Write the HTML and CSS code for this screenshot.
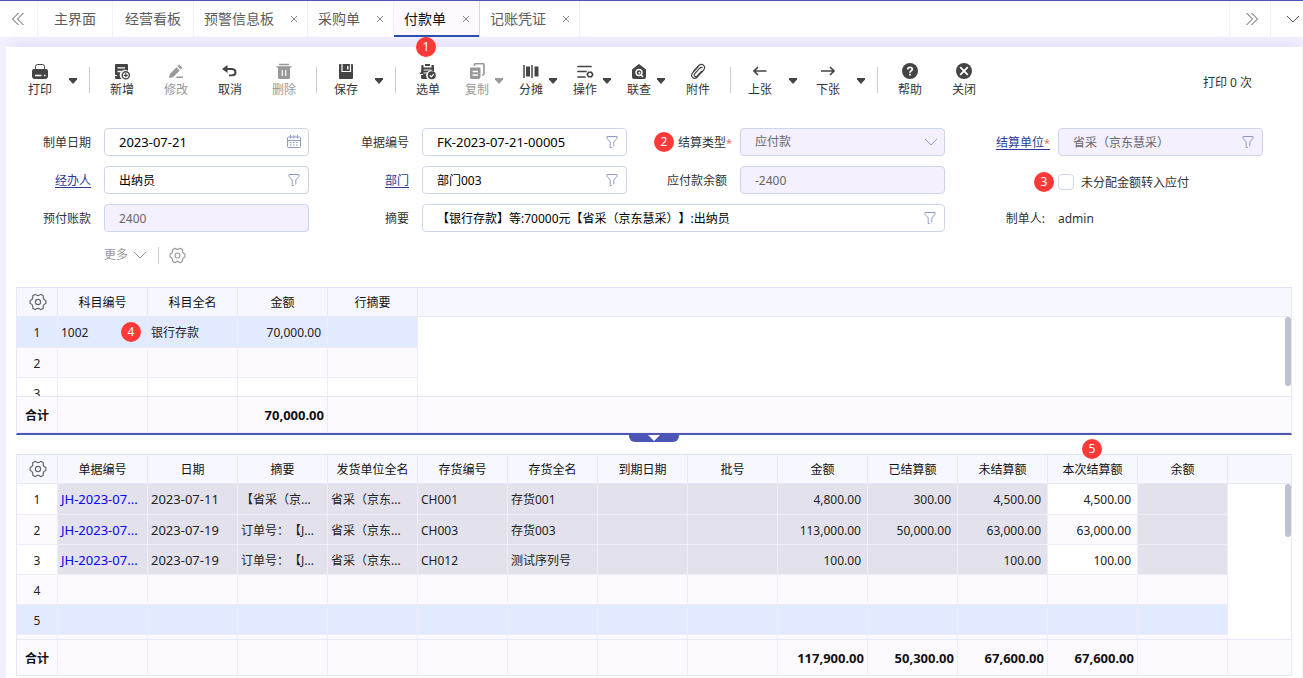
FILE: index.html
```html
<!DOCTYPE html>
<html lang="zh-CN">
<head>
<meta charset="utf-8">
<title>付款单</title>
<link rel="stylesheet" href="styles.css">
</head>
<body>
<svg class="defs" aria-hidden="true">
  <symbol id="gear" viewBox="0 0 18 18"><path d="M6.300 1.350Q9 3.800 11.700 1.350L14.300 2.850Q13.500 6.400 16.900 7.500V10.500Q13.500 11.600 14.300 15.150L11.700 16.650Q9 14.200 6.300 16.650L3.700 15.150Q4.500 11.600 1.100 10.500V7.500Q4.500 6.400 3.700 2.850z" fill="none" stroke="currentColor" stroke-width="1.200" stroke-linejoin="round"/><circle cx="9" cy="9" r="2.600" fill="none" stroke="currentColor" stroke-width="1.200"/></symbol>
  <symbol id="funnel" viewBox="0 0 16 16"><path d="M3 2.500h10v1.800L9.800 8v4.300M3 2.500v1.800L6.200 8v5.500h1.600" fill="none" stroke="currentColor"/></symbol>
  <symbol id="caret" viewBox="0 0 10 6"><path d="M1 0h8v1.500L5 6 1 1.500z" fill="currentColor"/></symbol>
  <symbol id="down" viewBox="0 0 14 8"><path d="m1 1 6 6 6-6" fill="none" stroke="currentColor"/></symbol>
  <symbol id="close" viewBox="0 0 8 8"><path d="m1 1 6 6M7 1 1 7" fill="none" stroke="currentColor"/></symbol>
</svg>

<nav class="tabs">
  <button class="tab-nav" aria-label="向左"><svg width="14" height="14" viewBox="0 0 14 14"><path d="M7.500 1 1.500 7l6 6M12.500 1l-6 6 6 6" fill="none" stroke="currentColor"/></svg></button>
  <a class="tab home" href="#">主界面</a>
  <a class="tab plain" href="#">经营看板</a>
  <a class="tab" href="#">预警信息板<svg class="x"><use href="#close"/></svg></a>
  <a class="tab" href="#">采购单<svg class="x"><use href="#close"/></svg></a>
  <a class="tab active" href="#">付款单<svg class="x"><use href="#close"/></svg><span class="badge b1">1</span></a>
  <a class="tab" href="#">记账凭证<svg class="x"><use href="#close"/></svg></a>
  <span class="fill"></span>
  <button class="tab-nav right" aria-label="向右"><svg width="14" height="14" viewBox="0 0 14 14"><path d="m1.500 1 6 6-6 6M6.500 1l6 6-6 6" fill="none" stroke="currentColor"/></svg></button>
  <button class="tab-nav last" aria-label="展开"><svg width="14" height="8"><use href="#down"/></svg></button>
</nav>

<main class="panel">
  <div class="toolbar">
    <div class="split">
      <button class="tool"><svg viewBox="0 0 18 18"><path d="M4.500 7V3.500q0-2 2-2h5q2 0 2 2V7" fill="none" stroke="currentColor"/><path d="M3 6h12q2 0 2 2v5q0 3-3 3H4q-3 0-3-3V8q0-2 2-2z" fill="currentColor"/><path d="M4 12.500h6.500M13 12.500h1.500" stroke="#fff" stroke-width="1.300"/></svg>打印</button>
      <button class="arrow" aria-label="打印选项"><svg><use href="#caret"/></svg></button>
    </div>
    <span class="sep"></span>
    <button class="tool"><svg viewBox="0 0 18 18"><path d="M3 1h11q1 0 1 1v6A4.600 4.600 0 0 0 8.600 16H3q-1 0-1-1v-2h2v-1H2V2q0-1 1-1z" fill="currentColor"/><path d="M4.500 4.800H12M4.500 8.500h4" stroke="#fff" stroke-width="1.300"/><circle cx="12.800" cy="12.300" r="3.600" fill="#fff" stroke="currentColor" stroke-width="1.400"/><path d="M12.800 10.300v4M10.800 12.300h4" stroke="currentColor" stroke-width="1.200"/></svg>新增</button>
    <button class="tool off" disabled><svg viewBox="0 0 18 18"><path d="m2 15 .8-4L9.500 4.300l3.200 3.200L6 14.200zM10.500 3.300 12.200 1.600l3.200 3.200-1.700 1.700zM8.500 15l1.400-1.400H16V15z" fill="currentColor"/></svg>修改</button>
    <button class="tool"><svg viewBox="0 0 18 18"><path d="M1 6 6.500 2v3h4.500q4.500.3 4.500 4.300 0 4-4.500 3.900H8v-1.700h3q2.500-.2 2.500-2.200T11 7H6.500v3z" fill="currentColor"/></svg>取消</button>
    <button class="tool off" disabled><svg viewBox="0 0 18 18"><path d="M4 1.500h10M1.500 4h15" stroke="currentColor" stroke-width="1.300"/><path d="M3 4h12v10.500q0 1.500-1.500 1.500h-9Q3 16 3 14.500z" fill="currentColor"/><path d="M7.300 7v6M10.700 7v6" stroke="#fff" stroke-width="1.200"/></svg>删除</button>
    <span class="sep"></span>
    <div class="split">
      <button class="tool"><svg viewBox="0 0 18 18"><path d="M3 1h12q1 0 1 1v13q0 1-1 1H3q-1 0-1-1V2q0-1 1-1z" fill="currentColor"/><path d="M5 1v7.500h8.500V1" fill="none" stroke="#fff" stroke-width="1.200"/><path d="M10.800 3v3.500" stroke="#fff" stroke-width="1.400"/></svg>保存</button>
      <button class="arrow" aria-label="保存选项"><svg><use href="#caret"/></svg></button>
    </div>
    <span class="sep"></span>
    <button class="tool"><svg viewBox="0 0 18 18"><path d="M2.500 2h2v2.500h8V2H14q1 0 1 1v5.700A4.500 4.500 0 0 0 8.700 16H3.500q-1.500 0-1.500-1.500V12h2v-1H1V9.500h1z" fill="currentColor"/><path d="M6 1h5v2H6z" fill="currentColor"/><path d="M4.500 7h8M4.500 10h4" stroke="#fff" stroke-width="1.200"/><circle cx="12.800" cy="12.300" r="4" fill="currentColor"/><path d="m10.800 12.300 1.500 1.600 2.600-2.900" fill="none" stroke="#fff" stroke-width="1.200"/></svg>选单</button>
    <div class="split compact">
      <button class="tool off" disabled><svg viewBox="0 0 18 18"><path d="M6.500 3V1.500Q6.500.7 7.500.7H15q1 0 1 1v9q0 1.300-1.500 1.300H14" fill="none" stroke="currentColor" stroke-width="1.700"/><path d="M3 4.500h8.500q1 0 1 1V14q0 2-2 2h-7Q2 16 2 14.500v-9q0-1 1-1z" fill="currentColor"/><path d="M4.500 8.500H10M4.500 12H10" stroke="#fff" stroke-width="1.300"/></svg>复制</button>
      <button class="arrow off" disabled aria-label="复制选项"><svg><use href="#caret"/></svg></button>
    </div>
    <div class="split compact">
      <button class="tool"><svg viewBox="0 0 18 18"><path d="M2 2v13M10 2v13" stroke="currentColor" stroke-width="1.500"/><path d="M4 3.500h4v10H4zM12.500 3.500h4v10h-4z" fill="currentColor"/></svg>分摊</button>
      <button class="arrow" aria-label="分摊选项"><svg><use href="#caret"/></svg></button>
    </div>
    <div class="split compact">
      <button class="tool"><svg viewBox="0 0 18 18"><path d="M2 3.500h13M2 8.500h8M2 14h7" stroke="currentColor" stroke-width="1.700" stroke-linecap="round"/><path d="m11.200 11.500 1.400-2.200h2.800l1.400 2.200-1.400 2.300h-2.800z" fill="none" stroke="currentColor" stroke-width="1.600"/></svg>操作</button>
      <button class="arrow" aria-label="操作选项"><svg><use href="#caret"/></svg></button>
    </div>
    <div class="split compact">
      <button class="tool"><svg viewBox="0 0 18 18"><path d="M9 1 15.500 6q.5.500.5 1.200V14q0 2-2 2H4q-2 0-2-2V7.200Q2 6.500 2.500 6z" fill="currentColor"/><circle cx="9" cy="9.500" r="3" fill="none" stroke="#fff" stroke-width="1.400"/><circle cx="9.400" cy="9.800" r="1" fill="#fff"/><path d="m11 12 2 2" stroke="#fff" stroke-width="1.400"/></svg>联查</button>
      <button class="arrow" aria-label="联查选项"><svg><use href="#caret"/></svg></button>
    </div>
    <button class="tool"><svg viewBox="0 0 18 18"><path d="m12.800 8-4.500 5q-1.300 1.300-2.500.2-1.200-1.200 0-2.500l5-5.500q1.500-1.400 2.800-.2M4.300 8.500 9.800 2.500q2.500-2.200 4.700-.3 2.200 2.200.2 4.800l-6.500 7.200q-2.400 2.200-4.600.3-2.100-2.300 0-4.700l6-6.500" fill="none" stroke="currentColor" stroke-width="1.200"/></svg>附件</button>
    <span class="sep"></span>
    <div class="split">
      <button class="tool"><svg viewBox="0 0 18 18"><path d="M15.500 8H3M7 4 3 8l4 4" fill="none" stroke="currentColor" stroke-width="1.700"/></svg>上张</button>
      <button class="arrow" aria-label="上张选项"><svg><use href="#caret"/></svg></button>
    </div>
    <div class="split">
      <button class="tool"><svg viewBox="0 0 18 18"><path d="M2 8h13M11 4l4 4-4 4" fill="none" stroke="currentColor" stroke-width="1.700"/></svg>下张</button>
      <button class="arrow" aria-label="下张选项"><svg><use href="#caret"/></svg></button>
    </div>
    <span class="sep"></span>
    <button class="tool"><svg viewBox="0 0 18 18"><circle cx="9" cy="8" r="8" fill="currentColor"/><path d="M6.700 6.500Q6.800 4.300 9 4.300t2.300 1.900Q11.300 7.400 9.900 8 9 8.500 9 9.800M9 10.800v1.700" fill="none" stroke="#fff" stroke-width="1.700"/></svg>帮助</button>
    <button class="tool"><svg viewBox="0 0 18 18"><circle cx="9" cy="8" r="8" fill="currentColor"/><path d="m5.200 4.200 7.600 7.600m0-7.600-7.600 7.600" stroke="#fff" stroke-width="1.800"/></svg>关闭</button>
    <span class="fill"></span>
    <span class="count">打印 0 次</span>
  </div>

  <form class="form">
    <label for="f1">制单日期</label>
    <div class="field"><input id="f1" class="code" value="2023-07-21"><svg viewBox="0 0 16 16"><path d="M2.500 3h11q1 0 1 1v8.500q0 1-1 1h-11q-1 0-1-1V4q0-1 1-1zM1.500 6.500h13M4.500 1v3.500M8 1v3.500M11.500 1v3.500" fill="none" stroke="currentColor"/><path d="M4 8.500h8M4 11h8" stroke="currentColor" stroke-dasharray="1.500 1.500"/></svg></div>
    <label for="f2">单据编号</label>
    <div class="field"><input id="f2" class="code" value="FK-2023-07-21-00005"><svg><use href="#funnel"/></svg></div>
    <label for="f3" class="req"><span class="badge b2">2</span>结算类型<i>*</i></label>
    <div class="field ro"><select id="f3"><option>应付款</option></select><svg class="chev" viewBox="0 0 14 8"><use href="#down"/></svg></div>
    <label for="f4" class="req link">结算单位<i>*</i></label>
    <div class="field ro"><input id="f4" value="省采（京东慧采）" readonly><svg><use href="#funnel"/></svg></div>

    <label for="f5" class="link">经办人</label>
    <div class="field"><input id="f5" value="出纳员"><svg><use href="#funnel"/></svg></div>
    <label for="f6" class="link">部门</label>
    <div class="field"><input id="f6" value="部门003"><svg><use href="#funnel"/></svg></div>
    <label for="f7">应付款余额</label>
    <div class="field ro"><input id="f7" value="-2400" readonly></div>
    <div class="check"><span class="badge b3">3</span><input type="checkbox" id="f8"><label for="f8">未分配金额转入应付</label></div>

    <label for="f9">预付账款</label>
    <div class="field ro"><input id="f9" value="2400" readonly></div>
    <label for="f10">摘要</label>
    <div class="field wide"><input id="f10" value="【银行存款】等:70000元【省采（京东慧采）】:出纳员"><svg><use href="#funnel"/></svg></div>
    <span class="lab">制单人:</span>
    <span class="maker">admin</span>

    <div class="more"><button type="button">更多<svg width="14" height="8"><use href="#down"/></svg></button><span class="bar"></span><button type="button" aria-label="设置"><svg width="17" height="17"><use href="#gear"/></svg></button></div>
  </form>

  <section class="grid accounts">
    <div class="rows">
      <table>
        <colgroup><col class="n"><col class="c"><col class="c"><col class="c"><col class="c"><col></colgroup>
        <thead><tr><th><button aria-label="列设置"><svg width="18" height="18"><use href="#gear"/></svg></button></th><th>科目编号</th><th>科目全名</th><th>金额</th><th>行摘要</th><th></th></tr></thead>
        <tbody>
          <tr class="sel"><td>1</td><td class="pin">1002<span class="badge b4">4</span></td><td>银行存款</td><td class="num">70,000.00</td><td></td><td></td></tr>
          <tr><td>2</td><td></td><td></td><td></td><td></td><td></td></tr>
          <tr><td>3</td><td></td><td></td><td></td><td></td><td></td></tr>
        </tbody>
      </table>
      <span class="thumb"></span>
    </div>
    <table class="sum">
      <colgroup><col class="n"><col class="c"><col class="c"><col class="c"><col class="c"><col></colgroup>
      <tbody><tr><td>合计</td><td></td><td></td><td class="num">70,000.00</td><td></td><td></td></tr></tbody>
    </table>
    <button class="handle" aria-label="收起"><svg width="12" height="6" viewBox="0 0 12 6"><path d="M0 0h12L6 6z" fill="#fff"/></svg></button>
  </section>

  <section class="grid bills">
    <span class="badge b5">5</span>
    <div class="rows">
      <table>
        <colgroup><col class="n"><col class="c"><col class="c"><col class="c"><col class="c"><col class="c"><col class="c"><col class="c"><col class="c"><col class="c"><col class="c"><col class="c"><col class="c"><col class="c"><col></colgroup>
        <thead><tr><th><button aria-label="列设置"><svg width="18" height="18"><use href="#gear"/></svg></button></th><th>单据编号</th><th>日期</th><th>摘要</th><th>发货单位全名</th><th>存货编号</th><th>存货全名</th><th>到期日期</th><th>批号</th><th>金额</th><th>已结算额</th><th>未结算额</th><th>本次结算额</th><th>余额</th><th></th></tr></thead>
        <tbody>
          <tr class="lock"><td>1</td><td class="code"><a href="#">JH-2023-07...</a></td><td class="code">2023-07-11</td><td>【省采（京...</td><td>省采（京东...</td><td>CH001</td><td>存货001</td><td></td><td></td><td class="num">4,800.00</td><td class="num">300.00</td><td class="num">4,500.00</td><td class="num edit">4,500.00</td><td></td><td></td></tr>
          <tr class="lock"><td>2</td><td class="code"><a href="#">JH-2023-07...</a></td><td class="code">2023-07-19</td><td>订单号：【J...</td><td>省采（京东...</td><td>CH003</td><td>存货003</td><td></td><td></td><td class="num">113,000.00</td><td class="num">50,000.00</td><td class="num">63,000.00</td><td class="num edit">63,000.00</td><td></td><td></td></tr>
          <tr class="lock"><td>3</td><td class="code"><a href="#">JH-2023-07...</a></td><td class="code">2023-07-19</td><td>订单号：【J...</td><td>省采（京东...</td><td>CH012</td><td>测试序列号</td><td></td><td></td><td class="num">100.00</td><td></td><td class="num">100.00</td><td class="num edit">100.00</td><td></td><td></td></tr>
          <tr><td>4</td><td></td><td></td><td></td><td></td><td></td><td></td><td></td><td></td><td></td><td></td><td></td><td></td><td></td><td></td></tr>
          <tr class="sel"><td>5</td><td></td><td></td><td></td><td></td><td></td><td></td><td></td><td></td><td></td><td></td><td></td><td></td><td></td><td></td></tr>
          <tr><td></td><td></td><td></td><td></td><td></td><td></td><td></td><td></td><td></td><td></td><td></td><td></td><td></td><td></td><td></td></tr>
        </tbody>
      </table>
      <span class="thumb"></span>
    </div>
    <table class="sum">
      <colgroup><col class="n"><col class="c"><col class="c"><col class="c"><col class="c"><col class="c"><col class="c"><col class="c"><col class="c"><col class="c"><col class="c"><col class="c"><col class="c"><col class="c"><col></colgroup>
      <tbody><tr><td>合计</td><td></td><td></td><td></td><td></td><td></td><td></td><td></td><td></td><td class="num">117,900.00</td><td class="num">50,300.00</td><td class="num">67,600.00</td><td class="num">67,600.00</td><td></td><td></td></tr></tbody>
    </table>
  </section>
</main>
</body>
</html>
```
FILE: styles.css
```css
* { box-sizing: border-box; }
body {
  margin: 0;
  min-height: 100vh;
  display: flex;
  flex-direction: column;
  background: #f3f0fe;
  color: #222;
  font: 12px/16px "Noto Sans", "Noto Sans CJK SC", sans-serif;
  text-spacing-trim: space-all;
}
button, input, select { font: inherit; color: inherit; margin: 0; padding: 0; border: 0; background: none; text-spacing-trim: inherit; }
button { cursor: pointer; }
svg { display: block; }
.defs { position: absolute; width: 0; height: 0; }
.fill { flex: 1; }

.badge {
  position: absolute;
  z-index: 2;
  width: 20px;
  height: 20px;
  border-radius: 50%;
  background: #ff3838;
  color: #fff;
  font: 12px/20px "Noto Sans", sans-serif;
  text-align: center;
}

/* tabs */
.tabs { display: flex; height: 37px; background: #fff; border-top: 1px solid #4b56b5; color: #555; }
.tab-nav { width: 38px; display: flex; align-items: center; justify-content: center; padding-right: 2px; border-right: 1px solid #f5f0fa; }
.tab-nav.right { width: 42px; border-left: 1px solid #f5f0fa; padding: 0 0 0 4px; }
.tab-nav.last { width: 32px; border: 0; padding: 0 0 0 12px; }
.tab {
  position: relative;
  display: flex;
  align-items: center;
  gap: 16px;
  padding: 0 9px 0 10px;
  border-right: 1px solid #f5f0fa;
  color: #5c5c5c;
  font-size: 14px;
  line-height: 20px;
  text-decoration: none;
}
.tab.home { padding: 0 16px; }
.tab.plain { padding: 0 12px; }
.tab.active { color: #111; background: #fdf9ff; border-color: #d9d6ee; box-shadow: inset 0 -2px #2b50ad; }
.x { width: 8px; height: 8px; color: #888; }
.b1 { left: 22px; top: 36px; }

.panel { flex: 1; margin: 10px 1px 0 6px; padding-top: 9px; background: #fff; box-shadow: 0 -10px 10px -4px #e6e3fb; }

/* toolbar */
.toolbar { display: flex; align-items: center; height: 48px; padding: 0 50px 0 10px; color: #333; }
.tool { width: 54px; height: 38px; padding-top: 2px; display: flex; flex-direction: column; align-items: center; gap: 1px; white-space: nowrap; }
.toolbar > .fill { min-width: 20px; }
.tool svg { width: 18px; height: 18px; flex: none; color: #444; }
.split { display: flex; align-items: center; gap: 3px; margin-right: 5px; }
.split .tool { width: 48px; }
.arrow { width: 12px; display: flex; justify-content: center; padding-top: 1px; color: #444; }
.arrow svg { width: 10px; height: 6px; }
.split.compact { gap: 0; margin: 0 6px; }
.split.compact .tool { width: 32px; }
.split.compact .arrow { width: 12px; }
.split.compact { margin-right: 4px; }
.off, .tool.off svg { color: #999; }
.sep { width: 1px; height: 26px; margin: 0 5px; background: #ccc8d2; }
.count { padding-top: 6px; white-space: nowrap; }

/* form */
.form {
  display: grid;
  grid-template-columns: 98px 1fr 113px 1fr 113px 1fr 113px 1fr;
  row-gap: 10px;
  padding: 24px 39px 0 0;
  align-items: center;
  color: #333;
}
.form > label, .lab { position: relative; justify-self: end; margin-right: 13px; padding-top: 2px; white-space: nowrap; }
.maker { padding-top: 2px; }
.form > .req { margin-right: 8px; }
.req i { font-style: normal; font-size: 11px; color: #e0705c; }
.form > .link { color: #2d3a94; text-decoration: underline; text-underline-offset: 2px; }
.field { display: flex; align-items: center; min-width: 0; height: 28px; padding: 0 6px 0 14px; border: 1px solid #cfd4ee; border-radius: 4px; color: #000; }
.field input, .field select { flex: 1; width: 0; min-width: 0; height: 24px; outline: 0; appearance: none; }
.field svg { width: 16px; height: 16px; color: #8e9bc9; flex: none; }
.field .chev { width: 14px; height: 8px; }
.field.ro { background: #f4f0fe; color: #66666b; }
.field.wide { grid-column: span 3; }
.field .code, td.code { font-size: 13px; }
.check { position: relative; grid-column: 8; display: flex; align-items: center; gap: 7px; padding-top: 4px; white-space: nowrap; }
.check input { appearance: none; width: 16px; height: 16px; border: 1px solid #cfd4ee; border-radius: 4px; background: #fff; }
.check label { padding-top: 1px; }
.b2 { left: -24px; top: -1px; }
.b3 { left: -24px; top: 2px; }
.more { grid-column: 2; display: flex; align-items: center; height: 26px; color: #999; }
.more button { display: flex; align-items: center; gap: 5px; }
.more .bar { width: 1px; height: 17px; margin: 0 10px 0 11px; background: #ccc; }
.more svg { color: #8f95b5; }
.more .bar + button svg { color: #999; }

/* data grids */
.grid { position: relative; margin: 19px 10px 0; border: 1px solid #e8e6fa; border-top-color: #e0e3f6; }
.accounts { border-bottom: 2px solid #4b56b5; }
.rows { position: relative; overflow: hidden; }
.accounts .rows { height: 108px; }
.bills .rows { height: 184px; }
table { width: 100%; table-layout: fixed; border-collapse: separate; border-spacing: 0; }
.n { width: 41px; }
.c { width: 90px; }
th, td { height: 30px; padding: 2px 3px 0 3px; border-right: 1px solid #f1eaf8; border-bottom: 1px solid #f1eaf8; font-weight: 400; text-align: left; white-space: nowrap; }
td.code { padding-top: 0; }
th { height: 29px; background: #f6f7ff; border-color: #e8e8fa; color: #111; text-align: center; padding: 2px 0 0; }
th button { display: block; margin: 0 auto; color: #666; }
th:first-child { padding: 0 0 0 2px; }
td:first-child { text-align: center; padding: 2px 0 0; }
th:last-child { border-right: 0; }
tbody tr:first-child td { height: 31px; }
tbody tr:nth-child(even) td { background: #fdfaff; }
tbody tr.lock td:not(:first-child):not(.edit) { background: #e3e2ec; }
tbody tr.sel td { background: #e2eaff; }
tbody tr td:last-child, tbody tr.lock td:last-child:not(.edit):not(:first-child) { background: #fff; border: 0; }
td a { color: #0a00f0; text-decoration: none; }
td.num { text-align: right; padding-right: 6px; }
.pin { position: relative; }
.b4 { left: 63px; top: 5px; }
.b5 { left: 1065px; top: -16px; }
.thumb { position: absolute; right: 0; top: 29px; width: 6px; height: 69px; border-radius: 3px; background: #bfc1d1; }
.bills .thumb { height: 53px; }
.sum { font-weight: 700; color: #111; }
.sum tbody tr td, .sum tbody tr td:last-child { height: 37px; background: #fdfaff; border-top: 1px solid #e8e8fa; border-bottom: 1px solid #efedfa; font-weight: 700; }
.bills .sum tbody tr td { height: 36px; border-bottom: 0; }
.sum td.num { font-size: 13px; padding: 0 3px 0 0; }
.handle { position: absolute; left: 50%; top: 100%; width: 50px; height: 9px; margin-left: -25px; display: flex; justify-content: center; padding-top: 2px; border-radius: 0 0 6px 6px; background: #4b56b5; }
```
